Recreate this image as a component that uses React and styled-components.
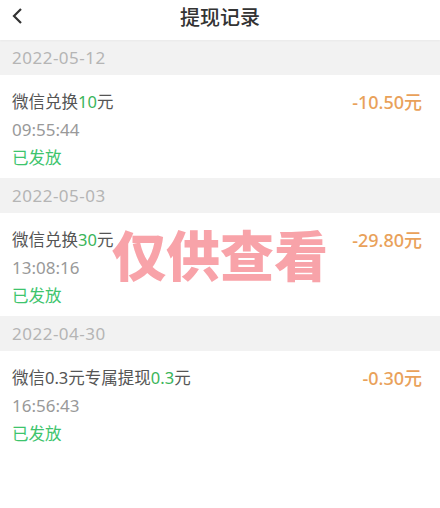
import React from 'react';
import styled, { createGlobalStyle } from 'styled-components';

const Global = createGlobalStyle`
  body {
    margin: 0;
    background: #fff;
    font-family: "Noto Sans", "Noto Sans CJK SC", sans-serif;
  }
`;

const Page = styled.div`
  position: relative;
  width: 440px;
  height: 508px;
  background: #fff;
  overflow: hidden;
`;

const Header = styled.div`
  height: 40px;
  display: flex;
  align-items: center;
  justify-content: center;
  position: relative;
  box-shadow: 0 1px 2px rgba(0, 0, 0, 0.04);
`;

const Back = styled.div`
  position: absolute;
  left: 8px;
  top: 6px;
  width: 20px;
  height: 20px;
  display: flex;
`;

const Title = styled.div`
  font-size: 20px;
  color: #333;
  font-weight: 500;
  margin-top: -7px;
`;

const DateBand = styled.div`
  height: 35px;
  background: #f2f2f2;
  display: flex;
  align-items: center;
  padding-left: 12px;
  font-size: 17px;
  color: #b5b5b5;
  letter-spacing: 0.5px;
`;

const Item = styled.div`
  height: 103px;
  box-sizing: border-box;
  padding: 13px 18px 0 12px;
  display: flex;
  justify-content: space-between;
`;

const Col = styled.div`
  display: flex;
  flex-direction: column;
`;

const Line = styled.div`
  height: 28px;
  line-height: 28px;
  font-size: ${p => p.size || 16.5}px;
  color: ${p => p.color || '#555'};
`;

const Hl = styled.span`
  color: #3bb55a;
`;

const Amount = styled.div`
  height: 28px;
  line-height: 28px;
  font-size: 18px;
  font-weight: 500;
  color: #e9a15a;
`;

const Watermark = styled.div`
  position: absolute;
  left: 0;
  right: 0;
  top: 222px;
  text-align: center;
  font-family: "Noto Sans CJK SC", sans-serif;
  font-weight: 900;
  font-size: 54px;
  line-height: 64px;
  color: rgba(246, 140, 148, 0.8);
  pointer-events: none;
`;

const records = [
  { date: '2022-05-12', pre: '微信兑换', num: '10', post: '元', time: '09:55:44', amount: '-10.50元' },
  { date: '2022-05-03', pre: '微信兑换', num: '30', post: '元', time: '13:08:16', amount: '-29.80元' },
  { date: '2022-04-30', pre: '微信0.3元专属提现', num: '0.3', post: '元', time: '16:56:43', amount: '-0.30元' },
];

export default function App() {
  return (
    <Page>
      <Global />
      <Header>
        <Back>
          <svg width="20" height="20" viewBox="0 0 20 20">
            <path d="M13 3 L6 10 L13 17" fill="none" stroke="#333" strokeWidth="2.2" />
          </svg>
        </Back>
        <Title>提现记录</Title>
      </Header>
      {records.map(r => (
        <React.Fragment key={r.date}>
          <DateBand>{r.date}</DateBand>
          <Item>
            <Col>
              <Line>{r.pre}<Hl>{r.num}</Hl>{r.post}</Line>
              <Line color="#999" size={17}>{r.time}</Line>
              <Line color="#3ec46d">已发放</Line>
            </Col>
            <Amount>{r.amount}</Amount>
          </Item>
        </React.Fragment>
      ))}
      <Watermark>仅供查看</Watermark>
    </Page>
  );
}
